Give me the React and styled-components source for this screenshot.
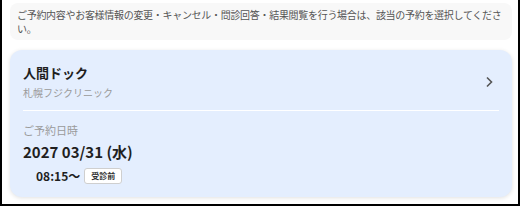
import React from "react";
import styled, { createGlobalStyle } from "styled-components";

const Global = createGlobalStyle`
  html, body { margin: 0; padding: 0; background: #fff; }
  body { font-family: "Noto Sans CJK JP", "Noto Sans", sans-serif; }
  * { box-sizing: border-box; }
`;

const Frame = styled.div`
  width: 520px;
  height: 206px;
  border-left: 2px solid #000;
  border-right: 2px solid #000;
  border-bottom: 2px solid #000;
  padding: 3px 6px 0 8px;
  display: flex;
  flex-direction: column;
  gap: 10px;
  overflow: hidden;
`;

const Notice = styled.div`
  background: #f8f8f8;
  border-radius: 8px;
  padding: 5px 6px 4px 7px;
  font-size: 10px;
  line-height: 14px;
  color: #555;
  letter-spacing: -0.3px;
  height: 37px;
`;

const Card = styled.div`
  background: #e4eefe;
  border-radius: 12px;
  box-shadow: 0 1px 4px rgba(0, 0, 0, 0.12);
  padding: 14px 13px 12px 13px;
  height: 147px;
`;

const Head = styled.div`
  display: flex;
  align-items: center;
  justify-content: space-between;
  padding-bottom: 10px;
  border-bottom: 1px solid #fff;
`;

const HeadText = styled.div`
  display: flex;
  flex-direction: column;
  gap: 4px;
`;

const Title = styled.div`
  font-size: 13px;
  font-weight: 700;
  color: #1f1f1f;
  line-height: 18px;
`;

const Sub = styled.div`
  font-size: 10px;
  color: #9a9a9a;
  line-height: 14px;
`;

const Label = styled.div`
  margin-top: 11px;
  font-size: 11px;
  color: #9a9a9a;
  line-height: 16px;
`;

const DateText = styled.div`
  margin-top: 4px;
  font-size: 15px;
  font-weight: 700;
  color: #1f1f1f;
  line-height: 20px;
`;

const TimeRow = styled.div`
  margin-top: 5px;
  padding-left: 13px;
  display: flex;
  align-items: center;
  gap: 4px;
`;

const Time = styled.span`
  font-size: 12px;
  font-weight: 700;
  color: #1f1f1f;
`;

const Badge = styled.span`
  background: #fff;
  border: 1px solid #cfcfcf;
  border-radius: 3px;
  font-size: 8px;
  font-weight: 700;
  color: #333;
  padding: 1px 6px;
  line-height: 12px;
`;

const Chevron = () => (
  <svg width="8" height="12" viewBox="0 0 8 12" style={{ marginRight: 6 }}>
    <path d="M2 1.5 L6.5 6 L2 10.5" fill="none" stroke="#555" strokeWidth="1.6" />
  </svg>
);

export default function App() {
  return (
    <>
      <Global />
      <Frame>
        <Notice>
          ご予約内容やお客様情報の変更・キャンセル・問診回答・結果閲覧を行う場合は、該当の予約を選択してください。
        </Notice>
        <Card>
          <Head>
            <HeadText>
              <Title>人間ドック</Title>
              <Sub>札幌フジクリニック</Sub>
            </HeadText>
            <Chevron />
          </Head>
          <Label>ご予約日時</Label>
          <DateText>2027 03/31 (水)</DateText>
          <TimeRow>
            <Time>08:15〜</Time>
            <Badge>受診前</Badge>
          </TimeRow>
        </Card>
      </Frame>
    </>
  );
}
